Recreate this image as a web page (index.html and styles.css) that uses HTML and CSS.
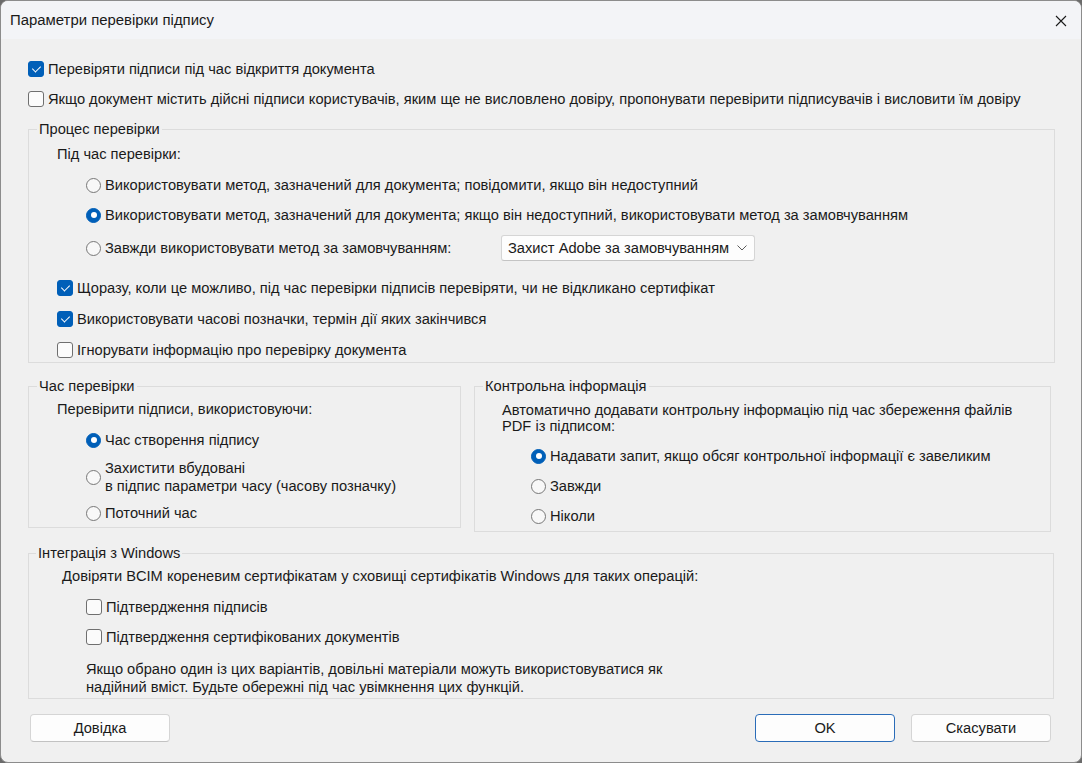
FILE: index.html
```html
<!DOCTYPE html>
<html lang="uk">
<head>
<meta charset="utf-8">
<title>Параметри перевірки підпису</title>
<link rel="stylesheet" href="styles.css">
</head>
<body>
<div class="window">
  <div class="titlebar">
    <span class="title">Параметри перевірки підпису</span>
    <span class="close">
      <svg width="12" height="12" viewBox="0 0 12 12"><path d="M1 1 L11 11 M11 1 L1 11" stroke="#1a1a1a" stroke-width="1.1" fill="none"/></svg>
    </span>
  </div>
  <div class="content">
    <div class="row top-row first"><span class="cb on"></span><span>Перевіряти підписи під час відкриття документа</span></div>
    <div class="row top-row"><span class="cb"></span><span>Якщо документ містить дійсні підписи користувачів, яким ще не висловлено довіру, пропонувати перевірити підписувачів і висловити їм довіру</span></div>

    <fieldset class="group g-process">
      <legend>Процес перевірки</legend>
      <div class="label l1">Під час перевірки:</div>
      <div class="row indent r-a"><span class="rb"></span><span>Використовувати метод, зазначений для документа; повідомити, якщо він недоступний</span></div>
      <div class="row indent r-b"><span class="rb on"></span><span>Використовувати метод, зазначений для документа; якщо він недоступний, використовувати метод за замовчуванням</span></div>
      <div class="row indent r-c"><span class="rb"></span><span class="fixed-label">Завжди використовувати метод за замовчуванням:</span>
        <span class="select"><span>Захист Adobe за замовчуванням</span>
          <svg width="10" height="6" viewBox="0 0 10 6"><path d="M0.5 0.5 L5 5 L9.5 0.5" stroke="#5c5c5c" stroke-width="1" fill="none"/></svg>
        </span>
      </div>
      <div class="row sub r-d"><span class="cb on"></span><span>Щоразу, коли це можливо, під час перевірки підписів перевіряти, чи не відкликано сертифікат</span></div>
      <div class="row sub r-e"><span class="cb on"></span><span>Використовувати часові позначки, термін дії яких закінчився</span></div>
      <div class="row sub r-e"><span class="cb"></span><span>Ігнорувати інформацію про перевірку документа</span></div>
    </fieldset>

    <div class="pair">
      <fieldset class="group g-time">
        <legend>Час перевірки</legend>
        <div class="label l2">Перевірити підписи, використовуючи:</div>
        <div class="row indent r-t1"><span class="rb on"></span><span>Час створення підпису</span></div>
        <div class="row indent r-t2"><span class="rb"></span><span class="two">Захистити вбудовані<br>в підпис параметри часу (часову позначку)</span></div>
        <div class="row indent r-t3"><span class="rb"></span><span>Поточний час</span></div>
      </fieldset>
      <fieldset class="group g-info">
        <legend>Контрольна інформація</legend>
        <div class="label l3">Автоматично додавати контрольну інформацію під час збереження файлів<br>PDF із підписом:</div>
        <div class="row indent r-i1"><span class="rb on"></span><span>Надавати запит, якщо обсяг контрольної інформації є завеликим</span></div>
        <div class="row indent r-i2"><span class="rb"></span><span>Завжди</span></div>
        <div class="row indent r-i2"><span class="rb"></span><span>Ніколи</span></div>
      </fieldset>
    </div>

    <fieldset class="group g-win">
      <legend>Інтеграція з Windows</legend>
      <div class="label l4">Довіряти BCIM кореневим сертифікатам у сховищі сертифікатів Windows для таких операцій:</div>
      <div class="row indent2 r-w1"><span class="cb"></span><span>Підтвердження підписів</span></div>
      <div class="row indent2 r-w2"><span class="cb"></span><span>Підтвердження сертифікованих документів</span></div>
      <div class="note">Якщо обрано один із цих варіантів, довільні матеріали можуть використовуватися як<br>надійний вміст. Будьте обережні під час увімкнення цих функцій.</div>
    </fieldset>

    <div class="buttons">
      <button class="btn">Довідка</button>
      <span class="spacer"></span>
      <button class="btn default">OK</button>
      <button class="btn">Скасувати</button>
    </div>
  </div>
</div>
</body>
</html>
```

FILE: styles.css
```css
* { box-sizing: border-box; }
html, body { margin: 0; padding: 0; }
body {
  background: #6b6b6b;
  font-family: "Liberation Sans", Arial, sans-serif;
  font-size: 14.67px;
  color: #1a1a1a;
}
.window {
  width: 1082px;
  height: 763px;
  background: #f0f0f0;
  border: 1px solid #8c8c8c;
  border-radius: 8px;
  overflow: hidden;
}
.titlebar {
  height: 38px;
  background: #f3f4f7;
  display: flex;
  align-items: center;
  justify-content: space-between;
  padding: 0 14px 0 9px;
}
.title { font-size: 14.9px; color: #1a1a1a; }
.close { display: flex; align-items: center; padding-top: 1px; }

.content { padding: 0 0 0 27px; }
.row { display: flex; align-items: center; height: 20px; line-height: 20px; white-space: nowrap; }
.row > .cb, .row > .rb { margin-right: 4px; flex: none; }
.top-row.first { margin-top: 20px; }
.top-row + .top-row { margin-top: 10px; }

.cb {
  display: inline-block;
  width: 16px; height: 16px;
  border: 1px solid #6f6f6f;
  border-radius: 3px;
  background: #fbfbfb;
  position: relative;
}
.cb.on {
  background: #005fb8;
  border-color: #005fb8;
}
.cb.on::after {
  content: "";
  position: absolute;
  left: 5px; top: 2px;
  width: 4px; height: 7px;
  border: solid #fff;
  border-width: 0 1.3px 1.3px 0;
  transform: rotate(45deg);
}
.rb {
  display: inline-block;
  width: 15px; height: 15px;
  border: 1px solid #777;
  border-radius: 50%;
  background: #f8f8f8;
  position: relative;
}
.rb.on {
  background: #005fb8;
  border-color: #005fb8;
}
.rb.on::after {
  content: "";
  position: absolute;
  left: 3.5px; top: 3.5px;
  width: 6px; height: 6px;
  border-radius: 50%;
  background: #fff;
}

.group {
  border: 1px solid #dcdcdc;
  margin: 0;
  padding: 0 0 0 28px;
  min-width: 0;
}
.group legend {
  padding: 0 2px;
  margin-left: -20px;
  line-height: 17px;
  font-size: 14.67px;
}
.g-process { margin-top: 12px; width: 1027px; height: 242px; }
.label { line-height: 20px; }
.l1 { margin-top: 6px; }
.indent { margin-left: 29px; }
.r-a { margin-top: 11px; }
.r-b { margin-top: 10px; }
.r-c { margin-top: 10px; height: 26px; }
.r-c + .sub { margin-top: 17px; }
.fixed-label { width: 396px; display: inline-block; }
.select {
  display: flex; align-items: center; justify-content: space-between;
  width: 254px; height: 26px;
  background: #fdfdfd;
  border: 1px solid #d5d5d5;
  border-bottom-color: #c4c4c4;
  border-radius: 3px;
  padding: 0 7px 0 6px;
}
.r-e { margin-top: 11px; }

.pair { display: flex; align-items: flex-start; gap: 13px; margin-top: 15px; }
.g-time { width: 433px; height: 150px; }
.g-info { width: 577px; height: 154px; padding-left: 27px; }
.g-info legend { margin-left: -19px; }
.l2 { margin-top: 4px; }
.r-t1 { margin-top: 11px; }
.r-t2 { margin-top: 9px; height: 36px; }
.two { line-height: 18px; white-space: nowrap; }
.r-t3 { margin-top: 8px; }
.l3 { margin-top: 7px; line-height: 16px; }
.r-i1 { margin-top: 12px; }
.r-i2 { margin-top: 10px; }

.g-win { margin-top: 13px; width: 1026px; height: 154px; padding-left: 33px; }
.g-win legend { margin-left: -26px; }
.l4 { margin-top: 4px; }
.indent2 { margin-left: 24px; }
.r-w1 { margin-top: 11px; }
.r-w2 { margin-top: 10px; }
.note { margin-left: 24px; margin-top: 13px; line-height: 18px; }

.buttons { display: flex; align-items: center; margin-top: 15px; padding-right: 30px; padding-left: 2px; }
.spacer { flex: 1; }
.btn {
  font-family: inherit;
  font-size: 14.67px;
  color: #1a1a1a;
  width: 140px; height: 28px;
  background: #fdfdfd;
  border: 1px solid #d5d5d5;
  border-bottom-color: #c2c2c2;
  border-radius: 4px;
  padding: 0;
}
.btn.default { border-color: #2a6cb8; margin-right: 16px; }
```
